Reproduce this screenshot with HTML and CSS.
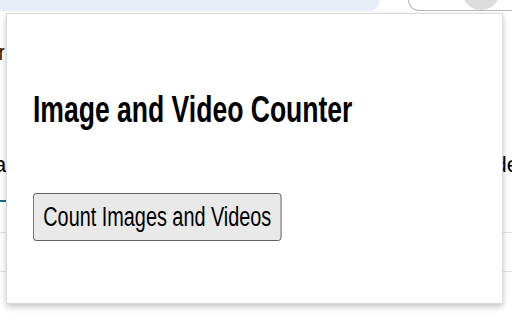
FILE: index.html
```html
<!DOCTYPE html>
<html>
<head>
<meta charset="utf-8">
<link rel="stylesheet" href="styles.css">
</head>
<body>
<div class="page">
  <div class="chrome">
    <div class="omnibox"></div>
    <div class="tabbox"><div class="avatar"></div></div>
  </div>
  <div class="text-r">r</div>
  <div class="row-mid"><span class="left-a">a</span><span class="right-d">de</span></div>
  <div class="teal-line"></div>
  <div class="gray-line first"></div>
  <div class="gray-line second"></div>
</div>

<div class="popup">
  <h1 class="title">Image and Video Counter</h1>
  <div class="actions">
    <button class="count-btn">Count Images and Videos</button>
  </div>
</div>
</body>
</html>
```

FILE: styles.css
```css
html, body {
  margin: 0;
  padding: 0;
  background: #ffffff;
}
body {
  width: 512px;
  height: 320px;
  overflow: hidden;
  position: relative;
  font-family: "Liberation Sans", Arial, sans-serif;
  color: #000;
}

.page {
  display: flex;
  flex-direction: column;
}

.chrome {
  display: flex;
  height: 11px;
}
.omnibox {
  width: 380px;
  background: #e8eef8;
  border-bottom-right-radius: 12px;
}
.tabbox {
  margin-left: 28px;
  flex: 1;
  border-left: 1px solid #b9b9b9;
  border-bottom: 1px solid #b9b9b9;
  border-bottom-left-radius: 16px;
  overflow: hidden;
  background: #fff;
}
.avatar {
  width: 38px;
  height: 38px;
  border-radius: 50%;
  background: #dcdcdc;
  margin-left: 53px;
  margin-top: -28px;
}

.text-r {
  margin-top: 31px;
  font-size: 22px;
  line-height: 22px;
  margin-left: -1px;
  transform: scaleX(0.75);
  transform-origin: left top;
}

.row-mid {
  margin-top: 90px;
  display: flex;
  justify-content: space-between;
  font-size: 22px;
  line-height: 22px;
}
.left-a {
  margin-left: -6px;
}
.right-d {
  margin-right: -7px;
}

.teal-line {
  margin-top: 24px;
  width: 40px;
  height: 2px;
  background: #1d6f7c;
}
.gray-line {
  height: 1px;
  background: #e2e2e2;
}
.gray-line.first {
  margin-top: 30px;
}
.gray-line.second {
  margin-top: 38px;
}

.popup {
  position: absolute;
  left: 6px;
  top: 13px;
  width: 469px;
  height: 213px;
  background: #ffffff;
  border: 1px solid #d9d9d9;
  box-shadow: 0 3px 6px rgba(0, 0, 0, 0.22);
  padding: 76px 0 0 26px;
  box-sizing: content-box;
}

.title {
  margin: 0;
  font-size: 36px;
  line-height: 40px;
  font-weight: 700;
  white-space: nowrap;
  transform: scaleX(0.737);
  transform-origin: left top;
}

.actions {
  margin-top: 63px;
}
.count-btn {
  font-family: "Liberation Sans", Arial, sans-serif;
  font-size: 27px;
  line-height: 30px;
  padding: 8px 13px;
  color: #000;
  background: #e9e9e9;
  border: 1px solid #4a4a4a;
  border-radius: 4px;
  white-space: nowrap;
  transform: scaleX(0.735);
  transform-origin: left top;
}
```
